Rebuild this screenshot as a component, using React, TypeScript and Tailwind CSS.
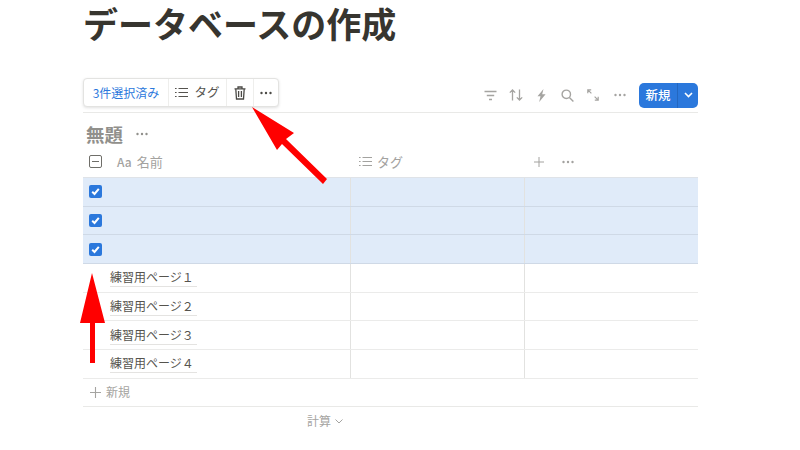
import React from "react";

const font = { fontFamily: '"Noto Sans CJK JP", "Noto Sans", sans-serif' };

function Dots({ className = "" }: { className?: string }) {
  return (
    <svg width="14" height="4" viewBox="0 0 14 4" className={className} fill="currentColor">
      <circle cx="2.5" cy="2" r="1.2" />
      <circle cx="7" cy="2" r="1.2" />
      <circle cx="11.5" cy="2" r="1.2" />
    </svg>
  );
}

function ListIcon({ className = "" }: { className?: string }) {
  return (
    <svg width="13" height="11" viewBox="0 0 13 11" className={className} fill="none" stroke="currentColor" strokeWidth="1.2">
      <path d="M0 1.5h1.6M0 5.5h1.6M0 9.5h1.6M3.5 1.5H13M3.5 5.5H13M3.5 9.5H13" />
    </svg>
  );
}

function Check() {
  return (
    <div className="w-[13px] h-[13px] rounded-[2px] bg-[#2b78dc] flex items-center justify-center">
      <svg width="11" height="11" viewBox="0 0 11 11" fill="none" stroke="white" strokeWidth="2">
        <path d="M2.2 5.8 L4.5 8 L8.8 2.8" />
      </svg>
    </div>
  );
}

function Row({ selected, name, strong }: { selected?: boolean; name?: string; strong?: boolean }) {
  return (
    <div
      className={`flex h-[28.7px] border-b ${selected ? "bg-[#e0ebf9] border-[#cfd9e6]" : "border-[#ebebea]"} ${strong ? "border-[#c9d3df]" : ""}`}
    >
      <div className="w-[268px] flex items-center border-r border-[#e2e2e0]">
        {selected ? (
          <div className="ml-[6px]">
            <Check />
          </div>
        ) : (
          <span className="ml-[27px] pb-[1px] pr-[3px] text-[12px] leading-[17px] text-[#55534e] border-b border-[#e4e3e1]">{name}</span>
        )}
      </div>
      <div className="w-[174px] border-r border-[#e2e2e0]" />
      <div className="flex-1" />
    </div>
  );
}

export default function App() {
  return (
    <div className="relative w-[800px] h-[450px] overflow-hidden bg-white" style={font}>
      <div className="pl-[83px]">
        <div className="w-[615px]">
          <h1 className="h-[78px] text-[35px] leading-[46px] font-bold text-[#37352f] whitespace-nowrap">データベースの作成</h1>

          <div className="flex items-center justify-between h-[35px] border-b border-[#e9e9e7]">
            <div className="flex items-stretch h-[29px] mb-[5px] rounded-[4px] border border-[#e3e3e1] shadow-[0_1px_3px_rgba(0,0,0,0.12)] bg-white">
              <div className="w-[85px] flex items-center justify-center border-r border-[#eeeeec] text-[12px] text-[#2b78dc]">3件選択済み</div>
              <div className="w-[58px] flex items-center justify-center gap-[6px] border-r border-[#eeeeec] text-[12.5px] text-[#55534e]">
                <ListIcon />
                タグ
              </div>
              <div className="w-[27px] flex items-center justify-center border-r border-[#eeeeec] text-[#4b4a46]">
                <svg width="12" height="14" viewBox="0 0 12 14" fill="none" stroke="currentColor" strokeWidth="1.3">
                  <path d="M0.5 2.8h11M4 2.6V1h4v1.6M1.8 3l.7 10h7l.7-10M4.6 5v6M7.4 5v6" />
                </svg>
              </div>
              <div className="w-[24px] flex items-center justify-center text-[#4b4a46]">
                <Dots />
              </div>
            </div>

            <div className="flex items-center text-[#a5a4a1]">
              <svg width="13" height="11" viewBox="0 0 13 11" fill="none" stroke="currentColor" strokeWidth="1.4" className="mr-[12px]">
                <path d="M0.5 1.5h12M2.8 5.5h7.4M5 9.5h3" />
              </svg>
              <svg width="14" height="12" viewBox="0 0 14 12" fill="none" stroke="currentColor" strokeWidth="1.3" className="mr-[14px]">
                <path d="M3.5 11.5V1M0.8 3.6L3.5 1l2.7 2.6M10.5 .5V11M7.8 8.4l2.7 2.6 2.7-2.6" />
              </svg>
              <svg width="9" height="13" viewBox="0 0 9 13" fill="currentColor" className="mr-[15px]">
                <path d="M6.5 0L0.5 7.2h3L2.2 13 8.6 5.2H5.2z" />
              </svg>
              <svg width="13" height="13" viewBox="0 0 13 13" fill="none" stroke="currentColor" strokeWidth="1.4" className="mr-[13px]">
                <circle cx="5.3" cy="5.3" r="4.2" />
                <path d="M8.4 8.4L12.4 12.4" />
              </svg>
              <svg width="12" height="12" viewBox="0 0 12 12" fill="none" stroke="currentColor" strokeWidth="1.2" className="mr-[14px]">
                <path d="M0.8 4.2V0.8h3.4M0.8 0.8l3.6 3.6M11.2 7.8v3.4H7.8M11.2 11.2L7.6 7.6" />
              </svg>
              <Dots className="mr-[12px]" />
              <div className="flex h-[25px] w-[59px] rounded-[5px] bg-[#2b78dc] text-white">
                <div className="w-[39px] flex items-center justify-center text-[12.5px] font-medium border-r border-[#2367c0]">新規</div>
                <div className="flex-1 flex items-center justify-center">
                  <svg width="9" height="6" viewBox="0 0 9 6" fill="none" stroke="currentColor" strokeWidth="1.6">
                    <path d="M1 1l3.5 3.5L8 1" />
                  </svg>
                </div>
              </div>
            </div>
          </div>

          <div className="flex items-center h-[37px] pt-[4px] pl-[3px] gap-[12px] text-[#91908c]">
            <span className="text-[18.5px] leading-[24px] font-bold">無題</span>
            <Dots />
          </div>

          <div className="flex h-[28px] pb-[4px] border-b border-[#dfe3e8] text-[#a3a29f] text-[13px]">
            <div className="w-[268px] flex items-center">
              <div className="ml-[6px] w-[13px] h-[13px] rounded-[2px] border border-[#6f6e69] flex items-center justify-center">
                <div className="w-[7px] h-[1.5px] bg-[#6f6e69]" />
              </div>
              <span className="ml-[15px] text-[12px] font-medium">Aa</span>
              <span className="ml-[5px]">名前</span>
            </div>
            <div className="w-[174px] flex items-center pl-[8px] gap-[5px]">
              <ListIcon />
              タグ
            </div>
            <div className="flex items-center pl-[9px]">
              <svg width="10" height="10" viewBox="0 0 11 11" stroke="currentColor" strokeWidth="1.1">
                <path d="M5.5 0v11M0 5.5h11" />
              </svg>
              <Dots className="ml-[17px]" />
            </div>
          </div>

          <Row selected />
          <Row selected />
          <Row selected strong />
          <Row name="練習用ページ１" />
          <Row name="練習用ページ２" />
          <Row name="練習用ページ３" />
          <Row name="練習用ページ４" />

          <div className="flex items-center h-[28px] pl-[7px] gap-[5px] border-b border-[#e9e9e7] text-[12px] text-[#a5a4a1]">
            <svg width="11" height="11" viewBox="0 0 11 11" stroke="currentColor" strokeWidth="1.1">
              <path d="M5.5 0v11M0 5.5h11" />
            </svg>
            新規
          </div>

          <div className="flex items-center h-[29px] pl-[224px] gap-[4px] text-[12px] text-[#a5a4a1]">
            計算
            <svg width="8" height="5" viewBox="0 0 8 5" fill="none" stroke="currentColor" strokeWidth="1">
              <path d="M.5 .5L4 4 7.5 .5" />
            </svg>
          </div>
        </div>
      </div>

      <svg className="absolute left-0 top-0" width="800" height="450" viewBox="0 0 800 450" fill="#ff0000">
        <path d="M252 107L294 133 286 139 327 179 323 184 282 144 277 150Z" />
        <path d="M92 273L105 323H95V363H90V323H80Z" />
      </svg>
    </div>
  );
}
